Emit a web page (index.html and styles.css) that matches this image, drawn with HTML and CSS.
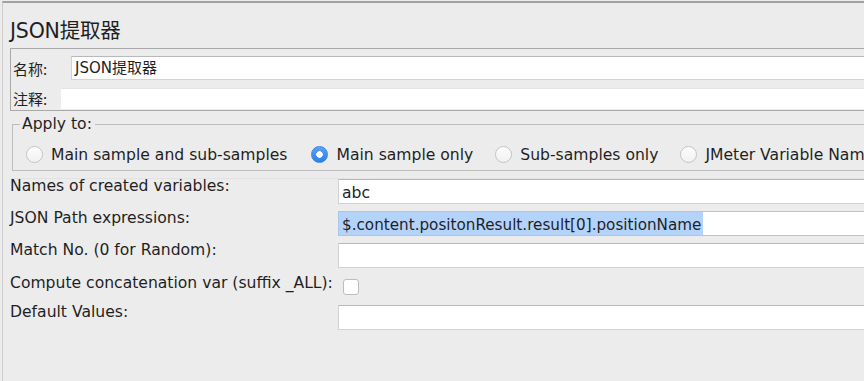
FILE: index.html
```html
<!DOCTYPE html>
<html lang="zh">
    <head>
        <meta charset="UTF-8" />
        <title>JSON提取器</title>
        <link rel="stylesheet" href="styles.css">
    </head>
    <body>
        <main class="window">
            <h1>JSON提取器</h1>

            <div class="name-panel">
                <div class="name-row">
                    <span class="cjk-label">名称:</span>
                    <div class="field name-field">JSON提取器</div>
                </div>
                <div class="name-row">
                    <span class="cjk-label">注释:</span>
                    <div class="field comment-field"></div>
                </div>
            </div>

            <fieldset class="apply-to">
                <legend>Apply to:</legend>
                <label class="radio"><span class="dot"></span>Main sample and sub-samples</label>
                <label class="radio"><span class="dot checked"></span>Main sample only</label>
                <label class="radio"><span class="dot"></span>Sub-samples only</label>
                <label class="radio"><span class="dot"></span>JMeter Variable Name to use</label>
            </fieldset>

            <div class="form">
                <div class="form-row">
                    <span class="label">Names of created variables:</span>
                    <div class="field">abc</div>
                </div>
                <div class="form-row">
                    <span class="label">JSON Path expressions:</span>
                    <div class="field focused"><span class="selected">$.content.positonResult.result[0].positionName</span></div>
                </div>
                <div class="form-row">
                    <span class="label">Match No. (0 for Random):</span>
                    <div class="field"></div>
                </div>
                <div class="form-row check-row">
                    <span class="label">Compute concatenation var (suffix _ALL):</span>
                    <span class="checkbox"></span>
                </div>
                <div class="form-row">
                    <span class="label">Default Values:</span>
                    <div class="field"></div>
                </div>
            </div>
        </main>
    </body>
</html>
```

FILE: styles.css
```css
* {
    box-sizing: border-box;
}

html,
body {
    margin: 0;
    height: 100%;
    overflow: hidden;
}

body {
    background: #ececec;
    color: #1f1f1f;
    font-family: "DejaVu Sans", "Noto Sans CJK SC", sans-serif;
    font-size: 15.6px;
}

.window {
    margin: 1px 0 0 2px;
    height: 100%;
    overflow: hidden;
    border-top: 2px solid #a2a2a2;
    border-left: 1px solid #cdcdcd;
    padding-left: 7px;
}

h1 {
    margin: 0;
    padding-top: 16px;
    height: 45px;
    line-height: 24px;
    font-size: 20.5px;
    font-weight: normal;
    letter-spacing: -0.2px;
}

.name-panel {
    margin-right: -20px;
    border: 1px solid #a9a9a9;
    border-right: none;
    padding: 7px 0 0 2px;
    height: 63px;
}

.name-row {
    display: flex;
    align-items: center;
}

.name-row + .name-row {
    margin-top: 8px;
}

.cjk-label {
    font-family: "Noto Sans CJK SC", sans-serif;
    font-size: 15px;
    width: 48px;
    flex: none;
}

.field {
    flex: 1;
    height: 25px;
    background: #fff;
    border: 1px solid #d2d2d2;
    border-top-color: #b9b9b9;
    padding: 1px 0 0 3px;
    line-height: 24px;
    white-space: nowrap;
    overflow: hidden;
}

.name-field {
    height: 24px;
    margin-left: 10px;
    padding-top: 0;
    line-height: 22px;
    font-size: 15px;
}

.comment-field {
    height: 21px;
    border: none;
    border-top: 1px solid #e4e4e4;
}

.apply-to {
    margin: 4px -20px 0 2px;
    padding: 6px 0 0 13px;
    height: 56px;
    border: 1px solid #bdbdbd;
    border-right: none;
    display: flex;
    align-items: center;
    gap: 22px;
    white-space: nowrap;
}

.apply-to legend {
    padding: 0 3px 0 2px;
    margin-left: -6px;
}

.radio {
    display: flex;
    align-items: center;
    gap: 8px;
}

.radio:first-of-type {
    margin-right: 2px;
}

.dot {
    width: 17px;
    height: 17px;
    border-radius: 50%;
    border: 1px solid #c4c4c4;
    background: linear-gradient(#fdfdfd, #f1f1f1);
    flex: none;
}

.dot.checked {
    border-color: #3b84e0;
    background: radial-gradient(circle, #fff 0 3px, transparent 3.5px),
        linear-gradient(#5aa2f6, #2f7fe8);
}

.form {
    margin: 7px -20px 0 0;
    border-top: 1px solid #e2e2e2;
}

.form-row {
    display: flex;
    height: 25px;
    margin-bottom: 7px;
}

.form-row .label {
    width: 328px;
    flex: none;
    line-height: 15px;
    white-space: nowrap;
}

.check-row {
    height: 23px;
    align-items: center;
}

.check-row .label {
    margin-top: -6px;
    width: 333px;
}

.checkbox {
    width: 16px;
    height: 16px;
    border: 1px solid #bdbdbd;
    border-radius: 3px;
    background: #fff;
}

.field.focused {
    border-color: #a9c6ec;
    padding: 0;
    font-size: 15.2px;
}

.selected {
    display: inline-block;
    height: 100%;
    padding: 1px 2px 0 3px;
    background: #b3d3fb;
}
```
